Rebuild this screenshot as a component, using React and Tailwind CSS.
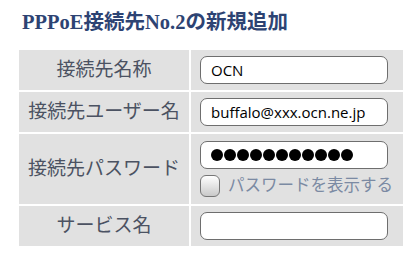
const LABEL = "flex items-center justify-center bg-[#e1e1e1] text-[19px] text-[#4b5262]";
const CELL = "flex flex-col justify-center bg-[#e1e1e1] pl-[9px] pr-[15px]";
const INPUT = "flex h-[28px] w-full shrink-0 items-center rounded-[7px] border-[1.5px] border-[#6e6e6e] bg-white pl-[10px] text-[15px] text-black";

function Field({ value }) {
  return <div className={INPUT} style={{ fontFamily: '"Open Sans", "DejaVu Sans", sans-serif' }}>{value}</div>;
}

export default function App() {
  return (
    <div className="h-[260px] w-[420px] bg-white pl-[19px]" style={{ fontFamily: '"Liberation Serif", "Noto Sans CJK JP", serif' }}>
      <h1 className="pt-[9px] pl-[3px] text-[20.5px] font-bold leading-[26px] text-[#2d4373]">PPPoE接続先No.2の新規追加</h1>
      <div className="mt-[15px] grid w-[384px] grid-cols-[170px_212px] grid-rows-[40px_40px_70px_40px] gap-[2px] bg-white">
        <div className={LABEL}>接続先名称</div>
        <div className={CELL}><Field value="OCN" /></div>

        <div className={LABEL}>接続先ユーザー名</div>
        <div className={CELL}><Field value="buffalo@xxx.ocn.ne.jp" /></div>

        <div className={LABEL}>接続先パスワード</div>
        <div className={CELL + " gap-[6px]"}>
          <div className={INPUT + " gap-[1px]"}>
            {Array.from({ length: 11 }).map((_, i) => (
              <span key={i} className="h-[12px] w-[12px] rounded-full bg-black" />
            ))}
          </div>
          <label className="flex items-center gap-[8px] whitespace-nowrap text-[16.5px] leading-[22px] text-[#7b8aa3]">
            <span className="h-[22px] w-[20px] shrink-0 rounded-[6px] border-[1.5px] border-[#767676] bg-gradient-to-b from-white to-[#c9c9c9]" />
            パスワードを表示する
          </label>
        </div>

        <div className={LABEL}>サービス名</div>
        <div className={CELL}><Field value="" /></div>
      </div>
    </div>
  );
}
